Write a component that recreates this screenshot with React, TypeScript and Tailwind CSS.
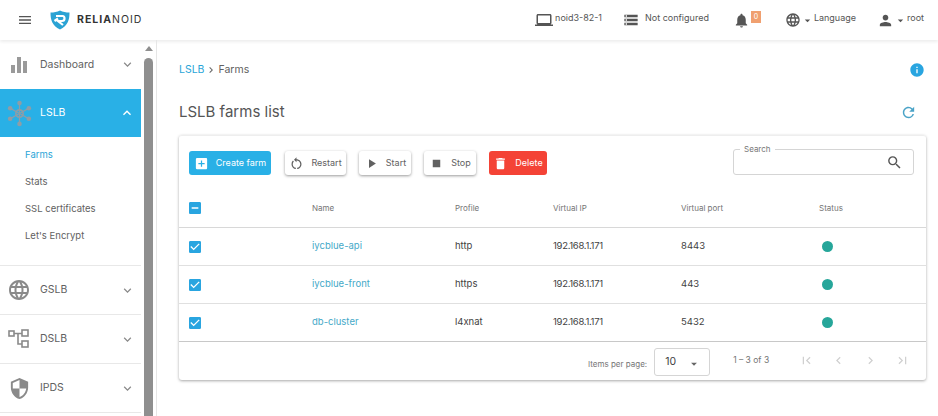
import type { ReactNode } from "react";
import {
  MdAddBox,
  MdArrowDropDown,
  MdCheckBox,
  MdChevronLeft,
  MdChevronRight,
  MdDelete,
  MdFirstPage,
  MdIndeterminateCheckBox,
  MdInfo,
  MdKeyboardArrowDown,
  MdKeyboardArrowUp,
  MdLanguage,
  MdLaptop,
  MdLastPage,
  MdMenu,
  MdNotifications,
  MdPerson,
  MdPlayArrow,
  MdRefresh,
  MdRestartAlt,
  MdSearch,
  MdSecurity,
  MdStop,
  MdStorage,
} from "react-icons/md";

const farms = [
  { name: "iycblue-api", profile: "http", port: "8443" },
  { name: "iycblue-front", profile: "https", port: "443" },
  { name: "db-cluster", profile: "l4xnat", port: "5432" },
];

const rowGrid = "grid grid-cols-[123px_143px_98px_128px_138px_1fr] items-center pl-2.5";

const Logo = () => (
  <svg width="20" height="20" viewBox="0 0 20 20">
    <path d="M10 0.5 C13 2 16 2.5 19.5 2.5 C19.5 10 18 15.5 10 19.5 C2 15.5 0.5 10 0.5 2.5 C4 2.5 7 2 10 0.5Z" fill="#2ba3d4" />
    <path d="M6 6 H12.5 Q14.5 6 14.5 8.5 Q14.5 11 12 11 H8 L13 15" fill="none" stroke="#fff" strokeWidth="2.2" />
    <path d="M4.5 11 L8 8.5" stroke="#fff" strokeWidth="2.2" />
  </svg>
);

const BarsIcon = () => (
  <svg width="16" height="16" viewBox="0 0 16 16" fill="#9a9a9a">
    <rect x="0" y="8" width="4" height="8" />
    <rect x="6" y="0" width="4" height="16" />
    <rect x="12" y="4" width="4" height="12" />
  </svg>
);

const NodesIcon = () => (
  <svg width="27" height="27" viewBox="0 0 26 26" fill="#8f9da6" stroke="#8f9da6">
    {[
      [13, 3],
      [22, 8],
      [22, 18],
      [13, 23],
      [4, 18],
      [4, 8],
    ].map(([x, y]) => (
      <g key={`${x}-${y}`}>
        <line x1="13" y1="13" x2={x} y2={y} strokeWidth="1.2" />
        <circle cx={x} cy={y} r="2.2" stroke="none" />
      </g>
    ))}
    <circle cx="13" cy="13" r="3.5" fill="none" strokeWidth="1.6" />
  </svg>
);

const TreeIcon = () => (
  <svg width="22" height="20" viewBox="0 0 22 20" fill="none" stroke="#8a8a8a" strokeWidth="1.6">
    <rect x="1" y="2" width="5" height="5" />
    <rect x="14" y="1" width="6" height="6" />
    <rect x="14" y="12" width="6" height="6" />
    <path d="M6 4.5 H14 M10 4.5 V15 H14" />
  </svg>
);

const NavItem = ({ icon, label, border = true }: { icon: ReactNode; label: string; border?: boolean }) => (
  <div className={`flex h-[49px] items-center pl-[3px] pr-2 text-[#616161] ${border ? "border-b border-[#e8e8e8]" : ""}`}>
    <div className="flex w-8 justify-center">{icon}</div>
    <span className="ml-[5px] text-[10.5px]">{label}</span>
    <MdKeyboardArrowDown className="ml-auto mr-[-2px] text-[#8a8a8a]" size={15} />
  </div>
);

const ActionButton = ({ icon, label, width }: { icon: ReactNode; label: string; width: string }) => (
  <button className={`flex h-6 items-center justify-center gap-[7px] rounded-[3px] bg-white text-[9px] text-[#616161] shadow-[0_1px_3px_rgba(0,0,0,0.4)] ${width}`}>
    {icon}
    {label}
  </button>
);

export default function App() {
  return (
    <div className="flex h-[416px] w-[938px] flex-col overflow-hidden bg-white font-['Inter',sans-serif] text-[#424242]">
      {/* Top bar */}
      <header className="flex h-10 shrink-0 items-center pl-[17px] pr-[14px] shadow-[0_2px_3px_rgba(0,0,0,0.07)]">
        <MdMenu size={16} className="text-[#555]" />
        <div className="ml-[17px] flex items-center">
          <Logo />
          <span className="ml-[7px] text-[10.5px] font-bold tracking-[1px] text-[#333]">
            RELIA<span className="font-normal">NOID</span>
          </span>
        </div>
        <div className="ml-auto flex items-center text-[9px] text-[#555]">
          <MdLaptop size={18} />
          <span className="ml-[2px] mb-1">noid3-82-1</span>
          <MdStorage size={16} className="ml-[21px]" />
          <span className="ml-[6px] mb-1">Not configured</span>
          <MdNotifications size={17} className="ml-6" />
          <span className="ml-[1px] mb-1.5 flex h-3 w-[10px] items-center justify-center bg-[#f0a070] text-[7px] text-white">0</span>
          <MdLanguage size={16} className="ml-6" />
          <MdArrowDropDown size={13} />
          <span className="mb-1">Language</span>
          <MdPerson size={17} className="ml-[21px]" />
          <MdArrowDropDown size={13} />
          <span className="mb-1">root</span>
        </div>
      </header>

      <div className="flex min-h-0 flex-1">
        {/* Sidebar */}
        <aside className="w-[141px] shrink-0">
          <NavItem icon={<BarsIcon />} label="Dashboard" border={false} />
          <div className="flex h-12 items-center bg-[#29b0e6] pl-[3px] pr-2 text-white">
            <div className="flex w-8 justify-center"><NodesIcon /></div>
            <span className="ml-[5px] text-[10.5px]">LSLB</span>
            <MdKeyboardArrowUp className="ml-auto mr-[-2px]" size={16} />
          </div>
          <div className="flex h-[129px] flex-col border-b border-[#e8e8e8] pl-[25px] pt-[5px] text-[9.5px] text-[#616161]">
            <span className="flex h-[27px] items-center text-[#29a5d8]">Farms</span>
            <span className="flex h-[27px] items-center">Stats</span>
            <span className="flex h-[27px] items-center">SSL certificates</span>
            <span className="flex h-[26px] items-center">Let's Encrypt</span>
          </div>
          <NavItem icon={<MdLanguage size={24} className="text-[#8a8a8a]" />} label="GSLB" />
          <NavItem icon={<TreeIcon />} label="DSLB" />
          <NavItem icon={<MdSecurity size={23} className="text-[#8a8a8a]" />} label="IPDS" />
        </aside>

        {/* Sidebar scrollbar */}
        <div className="ml-[3px] flex w-[9px] shrink-0 flex-col items-center">
          <div className="mt-[6px] h-0 w-0 border-x-[4px] border-b-[5px] border-x-transparent border-b-[#8f8f8f]" />
          <div className="mt-[7px] w-[9px] flex-1 rounded-t-[5px] bg-[#8f8f8f]" />
        </div>

        {/* Main */}
        <main className="ml-[3px] flex min-w-0 flex-1 flex-col border-l border-[#e6e6e6] pl-[22px] pr-3">
          <div className="mt-[22px] flex items-center text-[10.5px]">
            <span className="text-[#29a5d8]">LSLB</span>
            <MdChevronRight size={12} className="mx-[1px] text-[#666]" />
            <span className="text-[#616161]">Farms</span>
            <MdInfo size={16} className="ml-auto mr-[1px] text-[#29a5e0]" />
          </div>
          <div className="mt-[23px] flex items-center justify-between pr-[9px]">
            <h1 className="text-[15px] leading-[22px] text-[#555]">LSLB farms list</h1>
            <MdRefresh size={17} className="text-[#4aa3c7]" />
          </div>

          {/* Card */}
          <section className="mt-[12px] h-[245px] rounded-[3px] border-t border-[#eee] shadow-[0_1px_3px_rgba(0,0,0,0.35)]">
            <div className="flex items-start px-2.5 pt-[15px]">
              <button className="flex h-6 w-[82px] items-center justify-center gap-[7px] rounded-[3px] bg-[#29b0e6] text-[9px] text-white">
                <MdAddBox size={15} />
                Create farm
              </button>
              <div className="ml-[14px] flex gap-[13px]">
                <ActionButton icon={<MdRestartAlt size={15} />} label="Restart" width="w-[61px]" />
                <ActionButton icon={<MdPlayArrow size={15} />} label="Start" width="w-[52px]" />
                <ActionButton icon={<MdStop size={15} />} label="Stop" width="w-[52px]" />
              </div>
              <button className="ml-[13px] flex h-6 w-[58px] items-center justify-center gap-[7px] rounded-[3px] bg-[#f44336] text-[9px] text-white">
                <MdDelete size={15} />
                Delete
              </button>
              <div className="relative ml-auto mr-[2px] mt-[-2px] flex h-[26px] w-[181px] items-center justify-end rounded-[3px] border border-[#d5d5d5] pr-[10px]">
                <span className="absolute left-[6px] top-[-6px] bg-white px-1 text-[8px] leading-[10px] text-[#777]">Search</span>
                <MdSearch size={17} className="text-[#555]" />
              </div>
            </div>

            {/* Table */}
            <div className={`${rowGrid} mt-[14px] h-[39px] border-b border-[#d8d8d8] text-[8px] text-[#757575]`}>
              <MdIndeterminateCheckBox size={16} className="ml-[-2px] text-[#29a5e0]" />
              <span>Name</span>
              <span>Profile</span>
              <span>Virtual IP</span>
              <span>Virtual port</span>
              <span>Status</span>
            </div>
            {farms.map((farm, i) => (
              <div
                key={farm.name}
                className={`${rowGrid} h-[38px] text-[9.5px] ${i === 2 ? "border-b border-[#c8c8c8]" : "border-b border-[#e0e0e0]"}`}
              >
                <MdCheckBox size={16} className="ml-[-2px] text-[#29a5e0]" />
                <span className="text-[#45a9c8]">{farm.name}</span>
                <span>{farm.profile}</span>
                <span className="tracking-[-0.3px]">192.168.1.171</span>
                <span>{farm.port}</span>
                <span className="ml-[3px] h-[11px] w-[11px] rounded-full bg-[#26a69a]" />
              </div>
            ))}

            {/* Pagination */}
            <div className="flex h-[39px] items-center pl-[409px] text-[8px] text-[#757575]">
              <span className="mt-[5px]">Items per page:</span>
              <div className="ml-[7px] flex h-[28px] w-[56px] items-center justify-between rounded-[3px] border border-[#d5d5d5] pl-[10px] pr-[8px] text-[10.5px] text-[#424242]">
                10
                <MdArrowDropDown size={14} className="mt-[4px] text-[#666]" />
              </div>
              <span className="ml-[23px] mb-[3px] text-[8.5px]">1 – 3 of 3</span>
              <div className="ml-[30px] mb-[2px] flex gap-[17px] text-[#d0d0d0]">
                <MdFirstPage size={15} />
                <MdChevronLeft size={15} />
                <MdChevronRight size={15} />
                <MdLastPage size={15} />
              </div>
            </div>
          </section>
        </main>
      </div>
    </div>
  );
}
